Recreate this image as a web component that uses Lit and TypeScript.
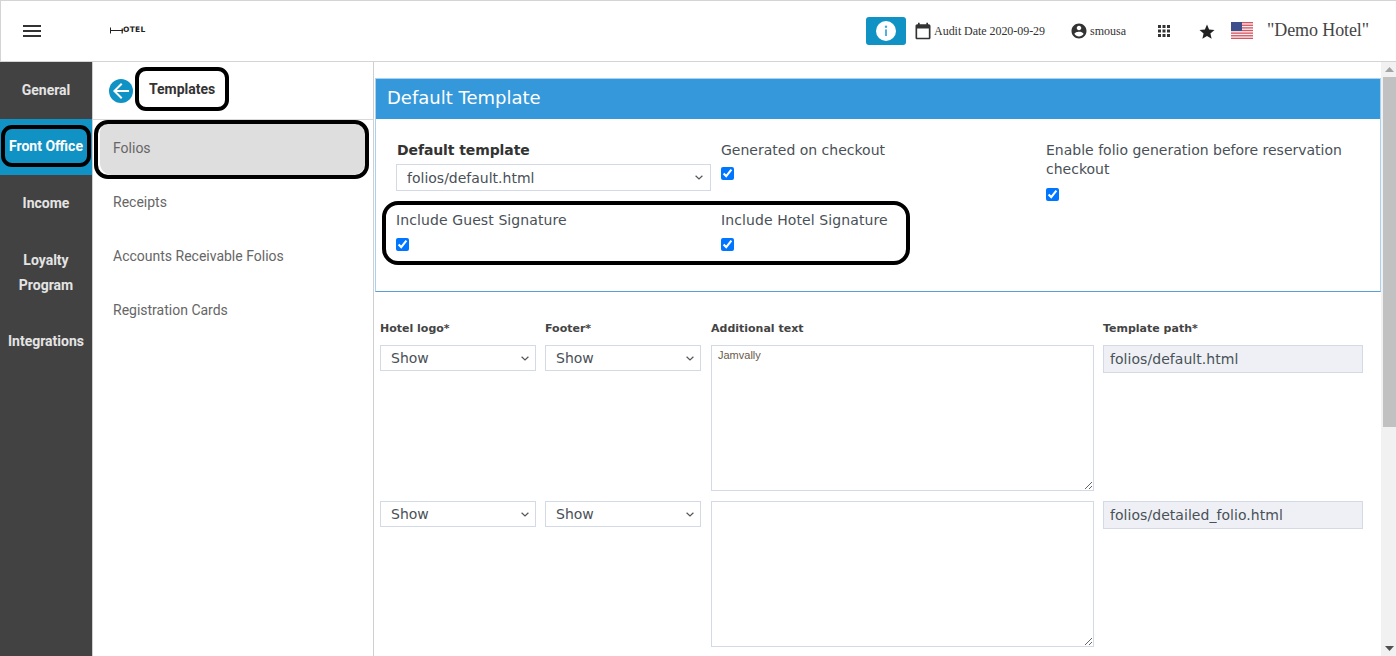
import { LitElement, html, css, svg } from "lit";
import { customElement } from "lit/decorators.js";

const railItems = [
  { label: "General", active: false },
  { label: "Front Office", active: true },
  { label: "Income", active: false },
  { label: "Loyalty Program", active: false },
  { label: "Integrations", active: false },
];

const panelItems = ["Folios", "Receipts", "Accounts Receivable Folios", "Registration Cards"];

const rows = [
  { text: "Jamvally", path: "folios/default.html" },
  { text: "", path: "folios/detailed_folio.html" },
];

const stripes = [0, 1, 2, 3, 4, 5, 6].map(
  (i) => svg`<rect x="0" y=${i * 2.62} width="22" height="1.31" fill="#d9535f"></rect>`
);

@customElement("app-root")
export class AppRoot extends LitElement {
  static styles = css`
    :host {
      display: block;
      width: 1396px;
      height: 656px;
      overflow: hidden;
      background: #fff;
      font-family: "DejaVu Sans", sans-serif;
      color: #495057;
    }

    .topbar {
      box-sizing: border-box;
      height: 62px;
      display: flex;
      align-items: center;
      border-top: 1px solid #d4d4d4;
      border-left: 1px solid #d4d4d4;
      border-bottom: 1px solid #d4d4d4;
      padding-right: 27px;
      font-family: "Liberation Serif", serif;
      color: #333;
    }

    .menu {
      width: 24px;
      height: 24px;
      margin: 0 0 0 19px;
      fill: #333;
    }

    .logo {
      display: flex;
      align-items: center;
      margin: -2px 0 0 66px;
      font: 700 7.5px/8px "DejaVu Sans", sans-serif;
      letter-spacing: 0.3px;
      color: #222;
    }

    .logo svg {
      width: 13px;
      height: 7px;
      display: block;
    }

    .spacer {
      flex: 1;
    }

    .info {
      width: 40px;
      height: 28px;
      border-radius: 3px;
      background: #1192c5;
      display: flex;
      align-items: center;
      justify-content: center;
      margin-top: -1px;
    }

    .info svg {
      width: 20px;
      height: 20px;
    }

    .audit {
      display: flex;
      align-items: center;
      font-size: 12px;
      letter-spacing: -0.05px;
      margin-left: 7px;
      gap: 1px;
    }

    .audit svg {
      width: 20px;
      height: 20px;
      fill: #333;
    }

    .user {
      display: flex;
      align-items: center;
      font-size: 12px;
      margin-left: 25px;
      gap: 2px;
    }

    .user svg {
      width: 18px;
      height: 18px;
      fill: #333;
    }

    .apps {
      width: 18px;
      height: 18px;
      fill: #333;
      margin-left: 29px;
    }

    .star {
      width: 18px;
      height: 18px;
      fill: #222;
      margin: 2px 0 0 25px;
    }

    .flag {
      width: 22px;
      height: 17px;
      margin: -1px 0 0 15px;
    }

    .hotel {
      font-size: 18px;
      letter-spacing: -0.1px;
      margin: -1px 0 0 14px;
      color: #444;
    }

    .body {
      display: flex;
      height: 594px;
    }

    .rail {
      width: 92px;
      flex: none;
      background: #424242;
      border-right: 1px solid #cfcfcf;
    }

    .rail-item {
      position: relative;
      box-sizing: border-box;
      min-height: 57px;
      padding: 16px 4px 15px;
      text-align: center;
      font: 700 14px/25px Roboto, sans-serif;
      color: #e4e4e4;
    }

    .rail-item.active {
      background: #1192c5;
      line-height: 24px;
      padding: 15px 0 0;
      height: 56px;
      min-height: 0;
      color: #fff;
    }

    .rail-item.active::after {
      content: "";
      position: absolute;
      inset: 6px 1px 8px 1px;
      border: 4px solid #000;
      border-radius: 11px;
    }

    .panel {
      width: 280px;
      flex: none;
      border-right: 1px solid #cfcfcf;
      font-family: Roboto, sans-serif;
    }

    .panel-head {
      height: 58px;
      box-sizing: border-box;
      display: flex;
      align-items: center;
      padding: 0 0 0 16px;
      border-bottom: 1px solid #d8d8d8;
    }

    .back {
      width: 24px;
      height: 24px;
      border-radius: 50%;
      background: #1192c5;
      display: flex;
      align-items: center;
      justify-content: center;
      margin-top: 1px;
    }

    .back svg {
      width: 24px;
      height: 24px;
      fill: #fff;
    }

    .panel-title {
      position: relative;
      margin: -3px 0 0 16px;
      font-weight: 700;
      font-size: 14px;
      color: #333;
    }

    .panel-title::after {
      content: "";
      position: absolute;
      top: -14px;
      bottom: -14px;
      left: -14px;
      right: -14px;
      border: 4px solid #000;
      border-radius: 11px;
    }

    .panel-list {
      margin-top: 1px;
    }

    .panel-item {
      position: relative;
      height: 54px;
      margin: 0 8px 0 7px;
      padding-left: 13px;
      display: flex;
      align-items: center;
      font-size: 14px;
      color: #666;
      border-radius: 12px;
    }

    .panel-item.active {
      background: #dedede;
    }

    .panel-item.active::after {
      content: "";
      position: absolute;
      inset: -1px -4px -4px -6px;
      border: 4px solid #000;
      border-radius: 14px;
    }

    .main {
      flex: 1;
      min-width: 0;
      margin-left: 1px;
      padding-top: 16px;
    }

    .card {
      box-sizing: border-box;
      height: 214px;
      border: 1px solid #a9d2f0;
      border-bottom: 1px solid #5a9fd4;
    }

    .card-head {
      height: 40px;
      background: #3498db;
      color: #fff;
      font-size: 18px;
      line-height: 38px;
      padding-left: 11px;
    }

    .form {
      display: grid;
      grid-template-columns: 325px 325px 325px;
      padding: 21px 0 0 20px;
    }

    .form label {
      display: block;
      font-size: 14px;
      line-height: 20px;
    }

    .field.default {
      min-height: 70px;
    }

    .field.third {
      grid-row: span 2;
      padding-right: 16px;
    }

    .form .field.third label {
      line-height: 19px;
      padding-top: 1px;
    }

    .field.third input[type="checkbox"] {
      margin-top: 9px;
    }

    .field.sign {
      position: relative;
    }

    .field.sign label,
    .field.hotel-sign label {
      letter-spacing: 0.1px;
    }

    .sign-box {
      position: absolute;
      top: -9px;
      left: -14px;
      width: 520px;
      height: 56px;
      border: 4px solid #000;
      border-radius: 16px;
    }

    .form .heading {
      font-weight: 700;
      font-size: 14px;
      letter-spacing: -0.1px;
      margin-left: 1px;
      color: #333;
    }

    input[type="checkbox"] {
      display: block;
      width: 13px;
      height: 13px;
      margin: 8px 0 0;
    }

    input[type="checkbox"].near {
      margin-top: 7px;
    }

    select {
      display: block;
      box-sizing: border-box;
      appearance: none;
      background: #fff url("data:image/svg+xml,%3Csvg xmlns='http://www.w3.org/2000/svg' width='8' height='5' viewBox='0 0 8 5'%3E%3Cpath d='M.6.8 4 4 7.4.8' fill='none' stroke='%23555' stroke-width='1.2'/%3E%3C/svg%3E") no-repeat right 6px center;
      border: 1px solid #d3dae6;
      border-radius: 0;
      color: #495057;
      font: 14px "DejaVu Sans", sans-serif;
      padding: 0 10px;
      height: 26px;
    }

    .form select {
      width: 315px;
      height: 27px;
      margin-top: 4px;
      background-position: right 7px center;
    }

    .table {
      display: grid;
      grid-template-columns: 156px 156px 384px 260px;
      column-gap: 9px;
      row-gap: 10px;
      padding: 29px 0 0 5px;
    }

    .table .th {
      font-size: 11px;
      font-weight: 700;
      line-height: 16px;
      color: #444;
      margin-bottom: -2px;
    }

    .table .wide {
      padding-left: 1px;
    }

    .table select {
      width: 100%;
    }

    textarea {
      display: block;
      box-sizing: border-box;
      width: 100%;
      height: 146px;
      margin: 0;
      padding: 3px 6px;
      border: 1px solid #d3dae6;
      font: 11px "Liberation Sans", sans-serif;
      color: #6b5a4a;
    }

    .path {
      display: block;
      box-sizing: border-box;
      width: 100%;
      height: 28px;
      padding: 0 6px;
      border: 1px solid #d3dae6;
      background: #eef0f5;
      font: 14px "DejaVu Sans", sans-serif;
      letter-spacing: 0.05px;
      color: #495057;
    }

    .scroll {
      width: 15px;
      flex: none;
      background: #f1f1f1;
      display: flex;
      flex-direction: column;
      align-items: flex-end;
    }

    .arrow {
      width: 13px;
      height: 15px;
      display: flex;
      align-items: center;
      justify-content: center;
    }

    .arrow svg {
      width: 9px;
      height: 5px;
    }

    .thumb {
      width: 13px;
      height: 350px;
      background: #c1c1c1;
    }

    .track {
      flex: 1;
    }
  `;

  render() {
    return html`
      <div class="topbar">
        <svg class="menu" viewBox="0 0 24 24"><path d="M3 18h18v-2H3v2zm0-5h18v-2H3v2zm0-7v2h18V6H3z"></path></svg>
        <div class="logo">
          <svg viewBox="0 0 13 7">
            <rect x="0" y="0.5" width="1" height="6" fill="#222"></rect>
            <rect x="0" y="3" width="13" height="1" fill="#222"></rect>
            <rect x="11.6" y="1.5" width="1.2" height="5" fill="#222"></rect>
          </svg>
          <span>OTEL</span>
        </div>
        <div class="spacer"></div>
        <div class="info">
          <svg viewBox="0 0 20 20">
            <circle cx="10" cy="10" r="10" fill="#fff"></circle>
            <circle cx="10" cy="5.8" r="1.2" fill="#3fa9d9"></circle>
            <rect x="9.1" y="8.4" width="1.8" height="6.6" fill="#3fa9d9"></rect>
          </svg>
        </div>
        <div class="audit">
          <svg viewBox="0 0 24 24"><path d="M19 4h-1V2h-2v2H8V2H6v2H5c-1.1 0-2 .9-2 2v14c0 1.1.9 2 2 2h14c1.1 0 2-.9 2-2V6c0-1.1-.9-2-2-2zm0 16H5V9h14v11z"></path></svg>
          <span>Audit Date 2020-09-29</span>
        </div>
        <div class="user">
          <svg viewBox="0 0 24 24"><path d="M12 2C6.48 2 2 6.48 2 12s4.48 10 10 10 10-4.48 10-10S17.52 2 12 2zm0 3c1.66 0 3 1.34 3 3s-1.34 3-3 3-3-1.34-3-3 1.34-3 3-3zm0 14.2c-2.5 0-4.71-1.28-6-3.22.03-1.99 4-3.08 6-3.08 1.99 0 5.97 1.09 6 3.08-1.29 1.94-3.5 3.22-6 3.22z"></path></svg>
          <span>smousa</span>
        </div>
        <svg class="apps" viewBox="0 0 24 24"><path d="M4 8h4V4H4v4zm6 12h4v-4h-4v4zm-6 0h4v-4H4v4zm0-6h4v-4H4v4zm6 0h4v-4h-4v4zm6-10v4h4V4h-4zm-6 4h4V4h-4v4zm6 6h4v-4h-4v4zm0 6h4v-4h-4v4z"></path></svg>
        <svg class="star" viewBox="0 0 24 24"><path d="M12 17.27L18.18 21l-1.64-7.03L22 9.24l-7.19-.61L12 2 9.19 8.63 2 9.24l5.46 4.73L5.82 21z"></path></svg>
        <svg class="flag" viewBox="0 0 22 17">
          <rect width="22" height="17" fill="#f4f4f4"></rect>
          ${stripes}
          <rect width="11" height="9" fill="#3f4f8c"></rect>
        </svg>
        <div class="hotel">"Demo Hotel"</div>
      </div>

      <div class="body">
        <div class="rail">
          ${railItems.map(
            (item) => html`<div class="rail-item ${item.active ? "active" : ""}">${item.label}</div>`
          )}
        </div>

        <div class="panel">
          <div class="panel-head">
            <div class="back">
              <svg viewBox="0 0 24 24"><path d="M20 11H7.83l5.59-5.59L12 4l-8 8 8 8 1.41-1.41L7.83 13H20v-2z"></path></svg>
            </div>
            <div class="panel-title">Templates</div>
          </div>
          <div class="panel-list">
            ${panelItems.map(
              (item, i) => html`<div class="panel-item ${i === 0 ? "active" : ""}">${item}</div>`
            )}
          </div>
        </div>

        <div class="main">
          <div class="card">
            <div class="card-head">Default Template</div>
            <div class="form">
              <div class="field default">
                <label class="heading">Default template</label>
                <select><option>folios/default.html</option></select>
              </div>
              <div class="field default">
                <label>Generated on checkout</label>
                <input class="near" type="checkbox" checked />
              </div>
              <div class="field third">
                <label>Enable folio generation before reservation checkout</label>
                <input type="checkbox" checked />
              </div>
              <div class="field sign">
                <div class="sign-box"></div>
                <label>Include Guest Signature</label>
                <input type="checkbox" checked />
              </div>
              <div class="field hotel-sign">
                <label>Include Hotel Signature</label>
                <input type="checkbox" checked />
              </div>
            </div>
          </div>

          <div class="table">
            <div class="th">Hotel logo*</div>
            <div class="th">Footer*</div>
            <div class="th wide">Additional text</div>
            <div class="th">Template path*</div>
            ${rows.map(
              (row) => html`
                <div><select><option>Show</option></select></div>
                <div><select><option>Show</option></select></div>
                <div class="wide"><textarea .value=${row.text}></textarea></div>
                <div><input class="path" type="text" readonly .value=${row.path} /></div>
              `
            )}
          </div>
        </div>

        <div class="scroll">
          <div class="arrow">
            <svg viewBox="0 0 9 5"><path d="M4.5 0L9 5H0z" fill="#a3a3a3"></path></svg>
          </div>
          <div class="thumb"></div>
          <div class="track"></div>
          <div class="arrow">
            <svg viewBox="0 0 9 5"><path d="M0 0h9L4.5 5z" fill="#505050"></path></svg>
          </div>
        </div>
      </div>
    `;
  }
}

declare global {
  interface HTMLElementTagNameMap {
    "app-root": AppRoot;
  }
}
